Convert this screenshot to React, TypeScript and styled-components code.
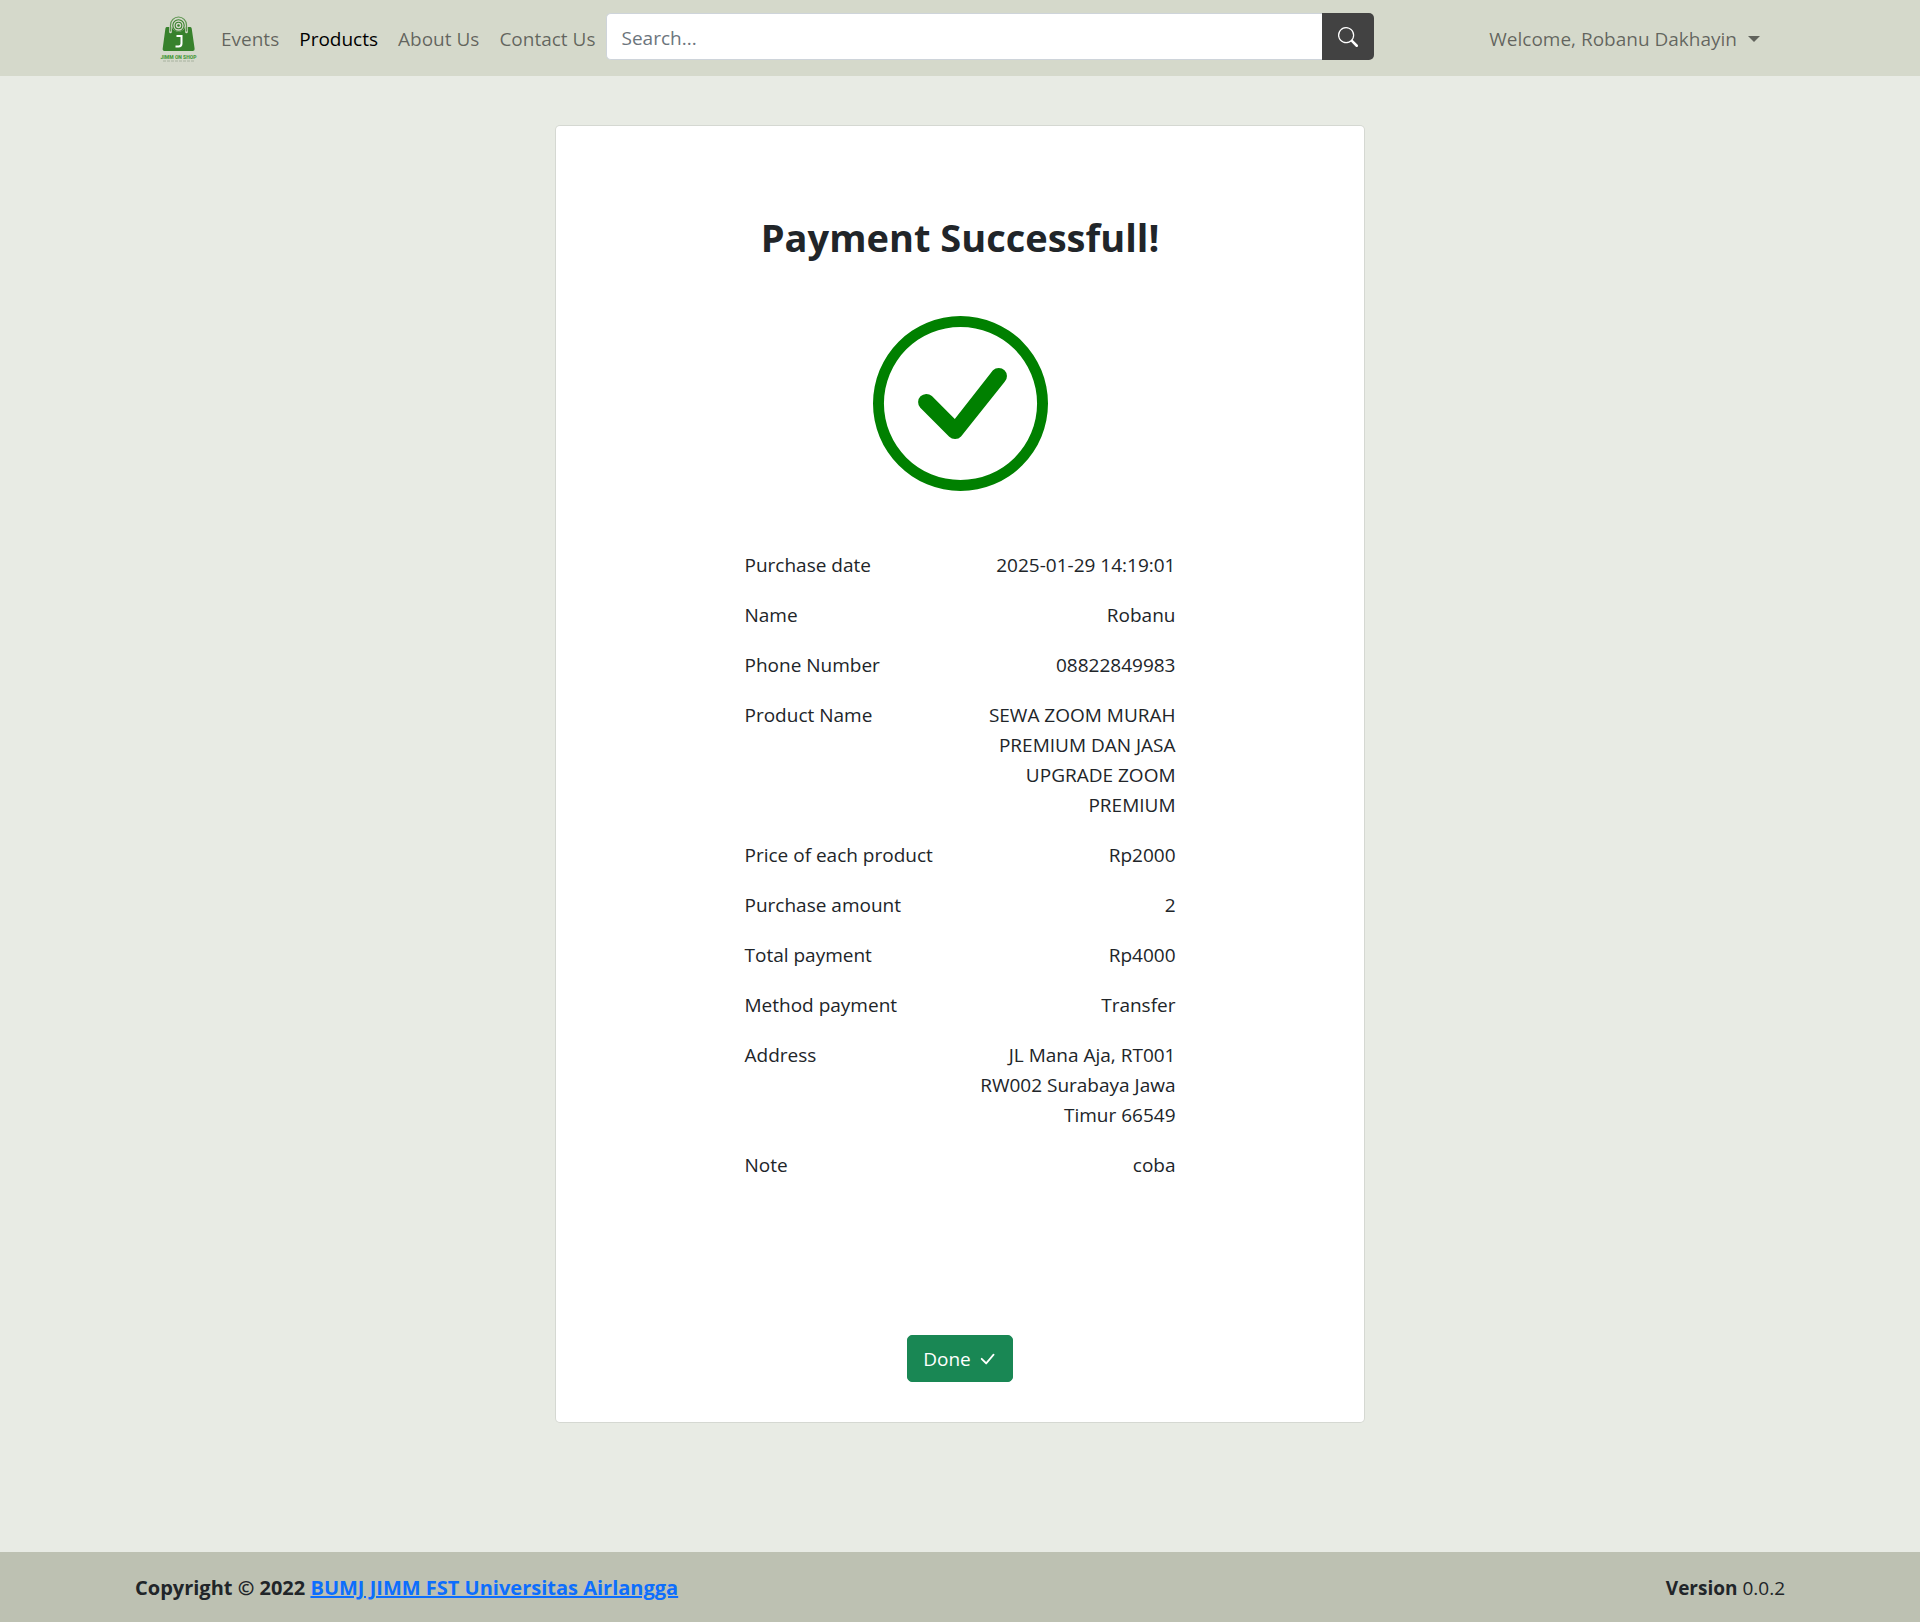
import React from "react";
import styled, { createGlobalStyle } from "styled-components";
import { BsCheckCircle, BsCheckLg, BsSearch } from "react-icons/bs";

const GlobalStyle = createGlobalStyle`
  *, *::before, *::after { box-sizing: border-box; }
  body {
    margin: 0;
    background: #e8ebe4;
    color: #212529;
    font-family: "Open Sans", "Noto Sans", sans-serif;
    font-size: 19px;
    line-height: 30px;
  }
`;

const Page = styled.div`
  min-height: 100vh;
  display: flex;
  flex-direction: column;
`;

const Container = styled.div`
  width: 100%;
  max-width: 1650px;
  margin: 0 auto;
`;

const Header = styled.header`
  background: #d5d9cb;
`;

const NavBar = styled(Container)`
  display: flex;
  align-items: center;
  min-height: 76px;
  padding: 8px 15px;
`;

const Brand = styled.a`
  display: flex;
  margin-right: 2px;
`;

const NavList = styled.ul`
  display: flex;
  margin: 0;
  padding: 0;
  list-style: none;
`;

const NavLink = styled.a<{ $active?: boolean }>`
  display: block;
  padding: 12px 10px 10px;
  color: ${(p) => (p.$active ? "#000" : "rgba(0, 0, 0, 0.55)")};
  text-decoration: none;
  white-space: nowrap;
`;

const SearchForm = styled.form`
  display: flex;
  flex: 0 1 768px;
  min-width: 0;
  margin-right: auto;
  padding-bottom: 3px;
  align-items: center;
`;

const SearchInput = styled.input`
  flex: 1;
  min-width: 0;
  height: 47px;
  padding: 2px 15px 0;
  border: 1px solid #ced4da;
  border-right: 0;
  border-radius: 5px 0 0 5px;
  background: #fff;
  color: #212529;
  font: inherit;
  &::placeholder { color: #6c757d; opacity: 1; }
`;

const SearchButton = styled.button`
  display: flex;
  align-items: center;
  justify-content: center;
  width: 52px;
  height: 47px;
  padding: 0;
  border: 0;
  border-radius: 0 5px 5px 0;
  background: #424242;
  color: #fff;
  cursor: pointer;
`;

const UserMenu = styled.button`
  display: flex;
  align-items: center;
  gap: 11px;
  padding: 12px 10px 10px;
  border: 0;
  background: none;
  color: rgba(0, 0, 0, 0.55);
  font: inherit;
  white-space: nowrap;
  cursor: pointer;
`;

const Caret = styled.span`
  border-top: 6px solid currentColor;
  border-left: 6px solid transparent;
  border-right: 6px solid transparent;
`;

const Main = styled.main`
  flex: 1;
  width: 100%;
  max-width: 1650px;
  margin: 0 auto;
  padding: 49px 15px 128px;
`;

const Card = styled.section`
  display: flex;
  flex-direction: column;
  align-items: center;
  width: 50%;
  min-width: 480px;
  margin: 0 auto;
  padding: 87px 15px 40px;
  border: 1px solid rgba(0, 0, 0, 0.08);
  border-radius: 5px;
  background: #fff;
  background-clip: padding-box;
`;

const Title = styled.h1`
  margin: 0 0 55px;
  font-size: 38px;
  line-height: 48px;
  font-weight: 700;
`;

const SuccessMark = styled(BsCheckCircle)`
  display: block;
  color: #008000;
`;

const Details = styled.dl`
  display: flex;
  flex-direction: column;
  gap: 20px;
  width: 100%;
  max-width: 431px;
  margin: 59px 0 155px;
`;

const DetailRow = styled.div`
  display: grid;
  grid-template-columns: 1fr 1fr;
  gap: 30px;
`;

const Term = styled.dt`
  white-space: nowrap;
`;

const Value = styled.dd`
  margin: 0;
  text-align: right;
`;

const DoneButton = styled.button`
  display: flex;
  align-items: center;
  gap: 6px;
  height: 47px;
  padding: 0 15px;
  border: 1px solid #198754;
  border-radius: 5px;
  background: #198754;
  color: #fff;
  font: inherit;
  cursor: pointer;
`;

const Footer = styled.footer`
  background: #bdc1b2;
`;

const FooterBar = styled(Container)`
  display: flex;
  align-items: center;
  justify-content: space-between;
  padding: 21px 0 19px;
`;

const Copyright = styled.strong`
  font-size: 20px;
`;

const FooterLink = styled.a`
  color: #0d6efd;
`;

const Logo = () => (
  <svg width="59" height="60" viewBox="0 0 59 60" role="img" aria-label="Jimm On Shop">
    <path d="M17 19h23q1.400 0 1.700 1.400L44.600 40.600Q45 43 43 43H14.500Q12.300 43 12.700 40.600L15.400 20.400Q15.700 19 17 19Z" fill="#37812c" />
    <circle cx="28.500" cy="17" r="6.800" fill="#d5d9cb" />
    <g fill="none" stroke="#37812c">
      <circle cx="28.500" cy="17.500" r="5.700" strokeWidth="1.100" />
      <circle cx="28.500" cy="17.500" r="3.300" strokeWidth="1.100" />
    </g>
    <circle cx="28.500" cy="17.500" r="1.300" fill="#37812c" />
    <path d="M20.500 24V17a8 8 0 0 1 16 0v7" fill="none" stroke="#d5d9cb" strokeWidth="2.600" strokeLinecap="round" />
    <path d="M20.500 23V17a8 8 0 0 1 16 0v6" fill="none" stroke="#5c9650" strokeWidth="1.200" strokeLinecap="round" />
    <path d="M26.500 28h5v7.500q0 3-3 3h-3" fill="none" stroke="#fff" strokeWidth="2" />
    <text x="28.500" y="51" textAnchor="middle" fontFamily="Roboto, sans-serif" fontSize="5" fontWeight="900" fill="#4a9a3c">JIMM ON SHOP</text>
    <path d="M13 53h31" stroke="#a8b29f" strokeWidth="1" strokeDasharray="3 1" />
  </svg>
);

const links = ["Events", "Products", "About Us", "Contact Us"];

const details: [string, string][] = [
  ["Purchase date", "2025-01-29 14:19:01"],
  ["Name", "Robanu"],
  ["Phone Number", "08822849983"],
  ["Product Name", "SEWA ZOOM MURAH PREMIUM DAN JASA UPGRADE ZOOM PREMIUM"],
  ["Price of each product", "Rp2000"],
  ["Purchase amount", "2"],
  ["Total payment", "Rp4000"],
  ["Method payment", "Transfer"],
  ["Address", "JL Mana Aja, RT001 RW002 Surabaya Jawa Timur 66549"],
  ["Note", "coba"],
];

export default function App() {
  return (
    <Page>
      <GlobalStyle />
      <Header>
        <NavBar as="nav">
          <Brand href="#"><Logo /></Brand>
          <NavList>
            {links.map((label) => (
              <li key={label}>
                <NavLink href="#" $active={label === "Products"}>{label}</NavLink>
              </li>
            ))}
          </NavList>
          <SearchForm role="search" onSubmit={(e) => e.preventDefault()}>
            <SearchInput type="text" placeholder="Search..." aria-label="Search" />
            <SearchButton type="submit" aria-label="Search"><BsSearch size={20} /></SearchButton>
          </SearchForm>
          <UserMenu type="button">
            Welcome, Robanu Dakhayin <Caret />
          </UserMenu>
        </NavBar>
      </Header>
      <Main>
        <Card>
          <Title>Payment Successfull!</Title>
          <SuccessMark size={175} />
          <Details>
            {details.map(([term, value]) => (
              <DetailRow key={term}>
                <Term>{term}</Term>
                <Value>{value}</Value>
              </DetailRow>
            ))}
          </Details>
          <DoneButton type="button">Done <BsCheckLg size={20} /></DoneButton>
        </Card>
      </Main>
      <Footer>
        <FooterBar>
          <Copyright>
            Copyright © 2022 <FooterLink href="#">BUMJ JIMM FST Universitas Airlangga</FooterLink>
          </Copyright>
          <span><strong>Version</strong> 0.0.2</span>
        </FooterBar>
      </Footer>
    </Page>
  );
}
